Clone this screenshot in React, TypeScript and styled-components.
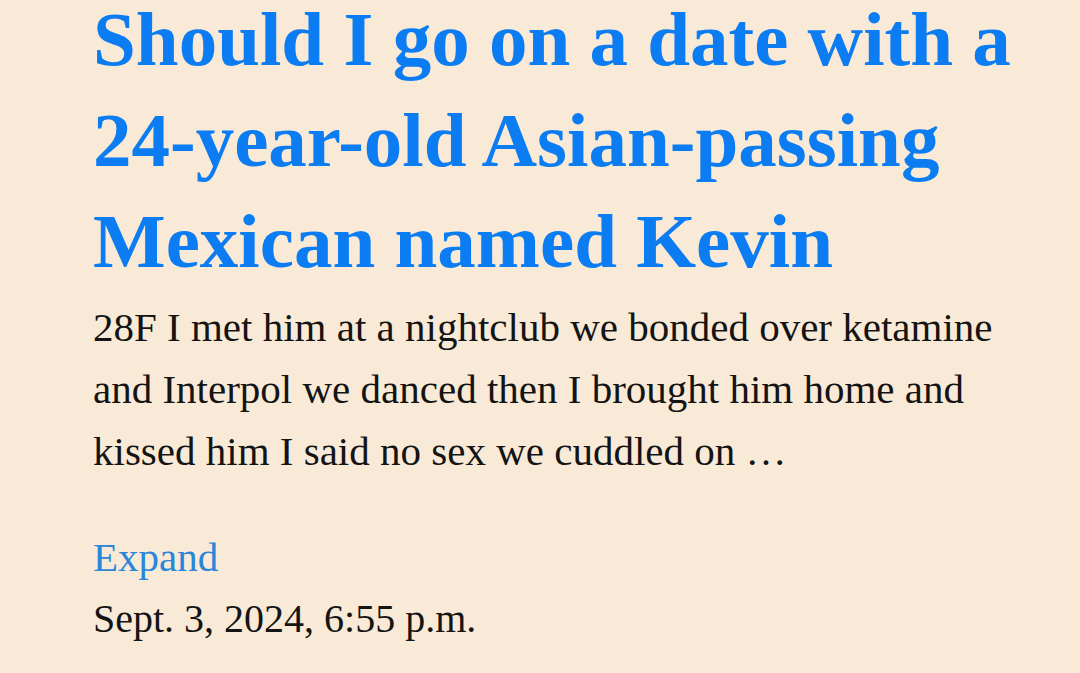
import React from "react";
import styled, { createGlobalStyle } from "styled-components";

const Global = createGlobalStyle`
  html, body { margin: 0; padding: 0; background: #f9ead7; }
  body { font-family: "Liberation Serif", "Times New Roman", serif; overflow: hidden; }
`;

const Page = styled.main`
  width: 1080px;
  height: 673px;
  box-sizing: border-box;
  padding: 0 0 0 93px;
  background: #f9ead7;
  display: flex;
  flex-direction: column;
  align-items: flex-start;
`;

const Title = styled.h1`
  margin: -11px 0 0 0;
  font-family: "Liberation Serif", serif;
  font-weight: 700;
  font-size: 77px;
  line-height: 101px;
  color: #0c7cf2;
`;

const Body = styled.p`
  margin: 4px 0 0 0;
  font-size: 41px;
  line-height: 62px;
  color: #141414;
`;

const Expand = styled.a`
  margin-top: 44px;
  font-size: 41px;
  line-height: 62px;
  color: #2a86db;
  text-decoration: none;
`;

const DateLine = styled.div`
  font-size: 40px;
  line-height: 62px;
  color: #141414;
`;

export default function App() {
  return (
    <Page>
      <Global />
      <Title>
        Should I go on a date with a<br />
        24-year-old Asian-passing<br />
        Mexican named Kevin
      </Title>
      <Body>
        28F I met him at a nightclub we bonded over ketamine<br />
        and Interpol we danced then I brought him home and<br />
        kissed him I said no sex we cuddled on …
      </Body>
      <Expand href="#">Expand</Expand>
      <DateLine>Sept. 3, 2024, 6:55 p.m.</DateLine>
    </Page>
  );
}
